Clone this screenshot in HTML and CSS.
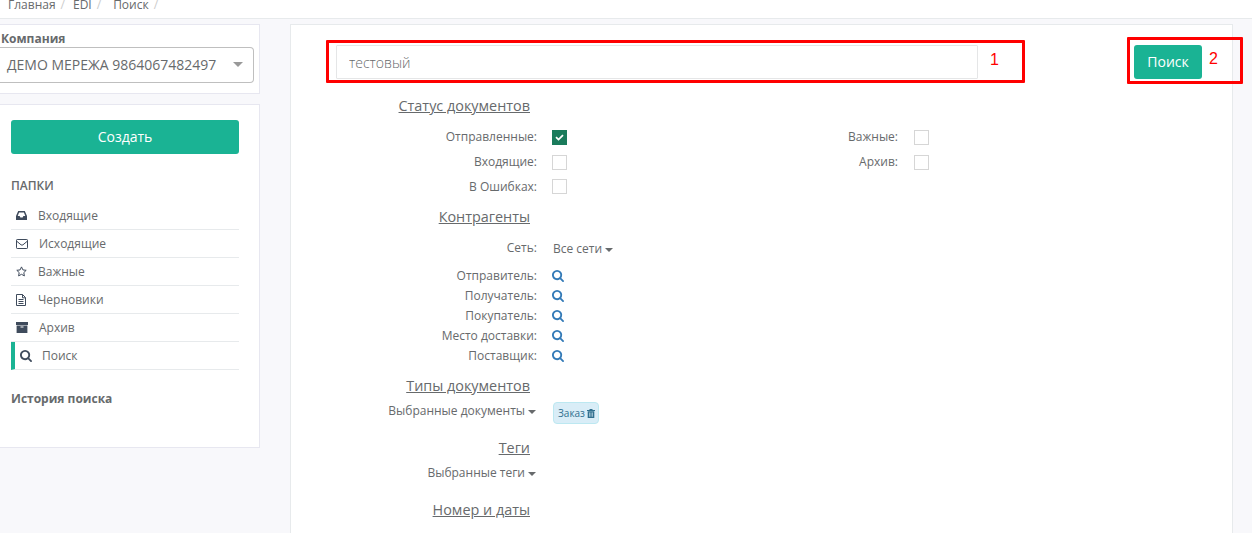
FILE: index.html
```html
<!DOCTYPE html>
<html lang="ru">
<head>
<meta charset="utf-8">
<title>Поиск</title>
<link rel="stylesheet" href="styles.css">
</head>
<body>
<svg class="defs" aria-hidden="true">
  <symbol id="search" viewBox="64 128 1664 1664"><path d="M1216 832q0-185-131.500-316.500t-316.500-131.500-316.500 131.500-131.500 316.500 131.500 316.500 316.500 131.500 316.500-131.500 131.500-316.500zm512 832q0 52-38 90t-90 38q-54 0-90-38l-343-342q-179 124-399 124-143 0-273.500-55.500t-225-150-150-225-55.500-273.500 55.500-273.500 150-225 225-150 273.500-55.500 273.500 55.500 225 150 150 225 55.500 273.500q0 220-124 399l343 343q37 37 37 90z"/></symbol>
</svg>
<nav class="breadcrumb"><a>Главная</a><i>/</i><a>EDI</a><i>/</i><a class="last">Поиск</a><i>/</i></nav>
<div class="layout">
  <aside class="sidebar">
    <section class="panel company">
      <label>Компания</label>
      <div class="select"><span>ДЕМО МЕРЕЖА 9864067482497</span><b class="arrow"></b></div>
    </section>
    <section class="panel folders">
      <button class="btn create">Создать</button>
      <h5>ПАПКИ</h5>
      <ul class="menu">
        <li><svg class="inbox" width="11" height="9" viewBox="0 0 11 9"><path fill-rule="evenodd" d="M2.200 0H8.800L11 5V9H0V5ZM3.100 1.500L1.700 5H3.600L4.400 6.400H6.600L7.400 5H9.300L7.900 1.500Z"/></svg><span>Входящие</span></li>
        <li><svg class="line" width="12" height="10" viewBox="0 0 12 10"><rect x=".5" y=".5" width="11" height="9" rx=".7"/><path d="M.7 2.200L5 5.800Q6 6.500 7 5.800L11.300 2.200"/></svg><span>Исходящие</span></li>
        <li><svg class="line" width="11" height="11" viewBox="0 0 11 11"><path d="M5.500 .9L6.900 3.900L10.200 4.300L7.800 6.600L8.400 9.900L5.500 8.300L2.600 9.900L3.200 6.600L.8 4.300L4.100 3.900Z"/></svg><span>Важные</span></li>
        <li><svg class="line" width="11" height="12" viewBox="0 0 11 12"><path d="M.5 .5H6.500L9.500 3.500V11.500H.5ZM6.500 .5V3.800H9.500M2.500 5.500H7.500M2.500 7.500H7.500M2.500 9.500H7.500"/></svg><span>Черновики</span></li>
        <li><svg width="12" height="11" viewBox="0 0 12 11"><path fill-rule="evenodd" d="M0 0H12V3H0ZM.6 3.500H11.400V11H.6ZM4.500 4.500V5.500H7.500V4.500Z"/></svg><span>Архив</span></li>
        <li class="active"><svg width="12" height="12"><use href="#search"/></svg><span>Поиск</span></li>
      </ul>
      <h5 class="history">История поиска</h5>
    </section>
  </aside>
  <main class="panel content">
    <div class="searchbar">
      <input class="query" value="тестовый">
      <button class="btn find">Поиск</button>
    </div>
    <h4>Статус документов</h4>
    <div class="checks">
      <label>Отправленные:</label><span class="box checked"><svg width="15" height="15" viewBox="0 0 15 15"><path d="M4 7.200L6.500 9.600L11 5.200"/></svg></span>
      <label>Важные:</label><span class="box"></span>
      <label>Входящие:</label><span class="box"></span>
      <label>Архив:</label><span class="box"></span>
      <label>В Ошибках:</label><span class="box up"></span>
    </div>
    <h4>Контрагенты</h4>
    <div class="row network"><label>Сеть:</label><span class="drop">Все сети<b class="caret"></b></span></div>
    <div class="row"><label>Отправитель:</label><svg class="lookup" width="12" height="12"><use href="#search"/></svg></div>
    <div class="row"><label>Получатель:</label><svg class="lookup" width="12" height="12"><use href="#search"/></svg></div>
    <div class="row"><label>Покупатель:</label><svg class="lookup" width="12" height="12"><use href="#search"/></svg></div>
    <div class="row"><label>Место доставки:</label><svg class="lookup" width="12" height="12"><use href="#search"/></svg></div>
    <div class="row"><label>Поставщик:</label><svg class="lookup" width="12" height="12"><use href="#search"/></svg></div>
    <h4 class="types">Типы документов</h4>
    <div class="row chosen"><label>Выбранные документы<b class="caret"></b></label><span class="tag">Заказ<svg width="8" height="9" viewBox="0 0 8 9"><path fill-rule="evenodd" d="M2.500 0H5.500V1H8V2H0V1H2.500ZM.7 2.300H7.300V9H.7ZM2.200 3.500V7.700H2.800V3.500ZM3.700 3.500V7.700H4.300V3.500ZM5.200 3.500V7.700H5.800V3.500Z"/></svg></span></div>
    <h4 class="tags">Теги</h4>
    <div class="row chosen"><label>Выбранные теги<b class="caret"></b></label></div>
    <h4 class="tags">Номер и даты</h4>
  </main>
</div>
<div class="mark mark-query"><span>1</span></div>
<div class="mark mark-find"><span>2</span></div>
</body>
</html>
```
FILE: styles.css
```css
* { box-sizing: border-box; }
body { margin: 0; height: 533px; overflow: hidden; background: #f8f8fb; color: #676a6c; font: 12px/20px "Open Sans", sans-serif; }
.defs { position: absolute; width: 0; height: 0; }
svg { fill: currentColor; flex: none; display: block; }
h4, h5, ul { margin: 0; padding: 0; font-weight: 400; }

.breadcrumb { height: 19px; background: #fff; border-bottom: 1px solid #e7eaec; padding-left: 8px; display: flex; line-height: 10px; }
.breadcrumb i { font-style: normal; color: #ccc; margin: 0 8px 0 5px; }
.breadcrumb .last { margin-left: 4px; }

.layout { display: flex; align-items: flex-start; gap: 30px; padding-top: 5px; }
.panel { background: #fff; border: 1px solid #e7eaec; }
.sidebar { width: 260px; display: grid; gap: 10px; }
.sidebar .panel { border-left: 0; border-color: #e7e7f0; }
.company { height: 70px; padding-top: 4px; }
.company label { display: block; height: 18px; padding-left: 1px; font-weight: 700; }
.select { width: 254px; height: 36px; border: 1px solid #bfbfbf; border-left: 0; border-radius: 0 4px 4px 0; padding: 0 10px 0 7px; display: flex; align-items: center; justify-content: space-between; font-size: 14px; }
.arrow { border: 5px solid transparent; border-top-color: #999; border-bottom: 0; margin-top: -2px; }
.folders { height: 344px; padding: 15px 20px 0 11px; }
.btn { font: 14px/20px "Open Sans", sans-serif; height: 34px; border: 0; border-radius: 3px; background: #1ab394; color: #fff; padding: 0; }
.create { display: block; width: 100%; }
h5 { font-size: 12px; font-weight: 600; line-height: 20px; margin: 22px 0 6px; }
.menu { list-style: none; }
.menu li { height: 28px; border-bottom: 1px solid #e7eaec; display: flex; align-items: center; padding-left: 5px; gap: 11px; }
.menu svg { color: #3f4b5c; }
.menu .line { fill: none; stroke: currentColor; stroke-width: 1; }
.menu .active { border-left: 4px solid #1ab394; gap: 10px; }
.history { margin-top: 19px; font-weight: 700; }

.content { width: 943px; height: 520px; }
.searchbar { display: flex; justify-content: space-between; padding: 20px 30px 0 45px; height: 69px; }
.query { width: 642px; height: 34px; border: 1px solid #e5e6e7; border-radius: 1px; padding: 0 12px; font: 300 14px "Open Sans", sans-serif; color: #676a6c; outline: 0; }
.find { width: 68px; }
h4 { width: 239px; text-align: right; font-size: 14.4px; line-height: 24px; text-decoration: underline; }
.checks { display: grid; grid-template-columns: 246px 15px 317px 15px; column-gap: 15px; grid-auto-rows: 25px; align-items: center; padding: 6px 0; }
.checks label { text-align: right; }
.checks label:nth-child(4n + 3) { padding-right: 1px; }
.box { width: 15px; height: 15px; border: 1px solid #d6d6d6; margin-top: 1px; }
.box.up { margin-top: 0; }
.checked { border: 0; background: #1a7b5b; }
.checked path { fill: none; stroke: #fff; stroke-width: 1.8; }
.row { height: 20px; display: flex; align-items: center; gap: 15px; }
.row label { width: 246px; text-align: right; }
.network { margin: 9px 0 8px; }
.drop { padding: 2px 0 0 1px; }
.caret { display: inline-block; border: 4px solid transparent; border-top-color: currentColor; border-bottom: 0; margin-left: 3px; vertical-align: 1px; }
.lookup { color: #337ab7; }
.types { margin-top: 8px; }
.chosen { margin: 3px 0 0; gap: 17px; }
.chosen label { width: 245px; }
.tags { margin-top: 15px; }
.tag { display: flex; align-items: center; gap: 2px; height: 22px; margin-top: 4px; padding: 0 3px 0 4px; border: 1px solid #bce8f1; border-radius: 4px; background: #d9edf7; color: #31708f; font-size: 10px; }

.mark { position: absolute; border: 3px solid #f00; border-radius: 1px; color: #f00; font: 16px/18px "Liberation Sans", sans-serif; }
.mark span { position: absolute; }
.mark-query { left: 326px; top: 40px; width: 699px; height: 43px; }
.mark-query span { left: 661px; top: 8px; }
.mark-find { left: 1127px; top: 37px; width: 116px; height: 47px; }
.mark-find span { left: 79px; top: 10px; }
```
